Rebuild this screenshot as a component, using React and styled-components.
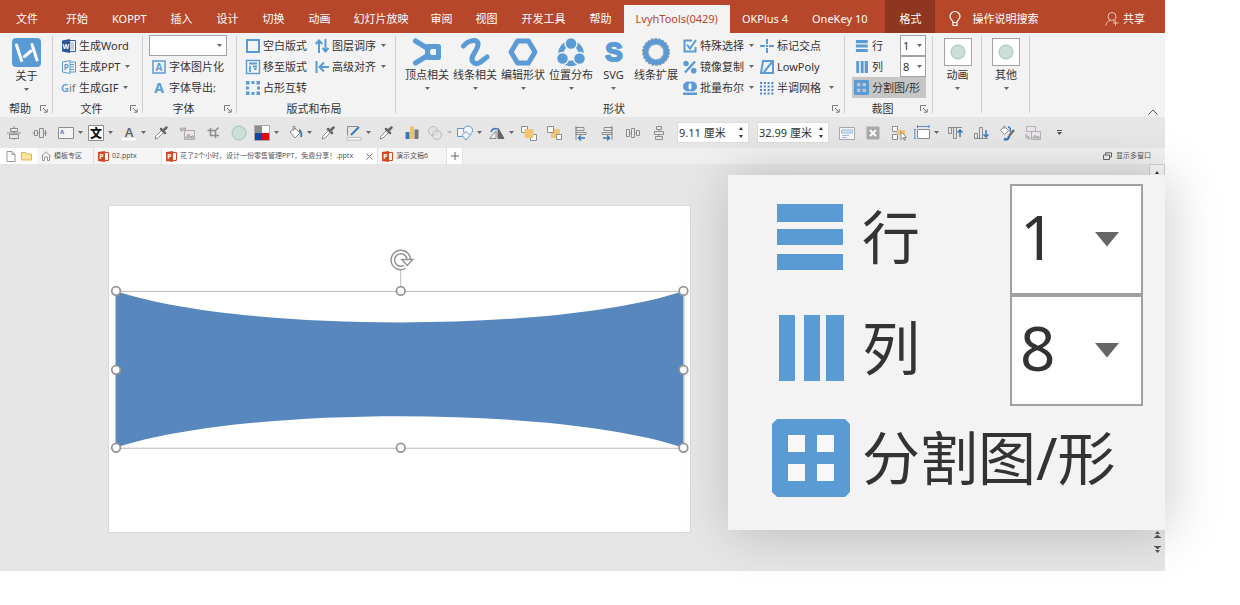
import React, { useState } from 'react';
import styled, { createGlobalStyle } from 'styled-components';

const BLUE = '#5b9bd5';
const GREY = '#8c8c8c';

const GlobalStyle = createGlobalStyle`
    * {
        box-sizing: border-box;
    }
    body {
        margin: 0;
        background: #fff;
        color: #333;
        font-family: 'Noto Sans', 'Noto Sans CJK SC', sans-serif;
        font-size: 11px;
        line-height: 16px;
    }
    button, input, select {
        margin: 0;
        padding: 0;
        border: 0;
        border-radius: 0;
        background: none;
        color: inherit;
        font: inherit;
        white-space: nowrap;
    }
    svg {
        display: block;
        flex: none;
        overflow: visible;
    }
`;

const Page = styled.div`
    display: flex;
    flex-direction: column;
    min-height: 100vh;
    padding: 0 75px 34px 0;
    overflow: hidden;
`;

/* ---------- menu tabs ---------- */

const MenuBar = styled.nav`
    display: flex;
    align-items: flex-end;
    height: 33px;
    padding-left: 4px;
    background: #b7472a;
    color: #fff;
`;

const MenuTab = styled.button`
    flex: none;
    height: ${p => (p.$shade ? 33 : 28)}px;
    padding: ${p => (p.$shade ? '5px 14px 0' : p.$tight ? '0 11px' : '0 12px')};
    margin-right: ${p => p.$gap || 0}px;
    background: ${p => (p.$active ? '#f3f3f3' : p.$shade ? '#8f3620' : 'transparent')};
    color: ${p => (p.$active ? '#b7472a' : '#fff')};
`;

const MenuAction = styled.button`
    display: flex;
    align-items: center;
    gap: ${p => p.$gap}px;
    height: 28px;
    margin-left: ${p => (p.$end ? 'auto' : '14px')};
    margin-right: ${p => (p.$end ? '20px' : '0')};
`;

/* ---------- ribbon ---------- */

const Ribbon = styled.div`
    display: flex;
    height: 84px;
    background: #f3f3f3;
`;

const GroupBox = styled.section`
    position: relative;
    flex: none;
    display: flex;
    flex-direction: column;
    width: ${p => p.$w}px;
    padding-top: 2px;
    &::after {
        content: '';
        position: absolute;
        top: 3px;
        right: 0;
        bottom: 4px;
        width: 1px;
        background: #cfcfcf;
    }
`;

const GroupBody = styled.div`
    display: flex;
    height: 63px;
    padding-left: ${p => p.$pad || 0}px;
`;

const GroupFooter = styled.div`
    display: flex;
    align-items: center;
    height: 19px;
    padding: 3px 5px 0 0;
    > span {
        flex: 1;
        text-align: center;
    }
`;

const Column = styled.div`
    display: flex;
    flex-direction: column;
    width: ${p => (p.$w ? p.$w + 'px' : 'auto')};
`;

const SmallButton = styled.button`
    display: flex;
    align-items: center;
    gap: 3px;
    height: 21px;
    width: ${p => (p.$pressed ? '74px' : 'auto')};
    padding-left: ${p => p.$pad || 0}px;
    background: ${p => (p.$pressed ? '#c6c6c6' : 'transparent')};
    > svg:nth-of-type(2) {
        margin-left: ${p => p.$arrowGap || 2}px;
    }
`;

const BigButton = styled.button`
    display: flex;
    flex-direction: column;
    align-items: center;
    width: ${p => p.$w}px;
    padding-top: 3px;
    > span {
        margin: 1px 0 4px;
    }
`;

const Swatch = styled.i`
    display: grid;
    place-items: center;
    width: 28px;
    height: 28px;
    border: 1px solid #a3a3a3;
    background: #fff;
`;

const SelectBox = styled.div`
    display: grid;
    align-items: center;
    width: ${p => p.$w}px;
    height: ${p => p.$h}px;
    border: ${p => p.$line}px solid #a0a0a0;
    background: #fff;
    > * {
        grid-area: 1 / 1;
    }
    > svg {
        justify-self: end;
        margin-right: ${p => p.$arrowPad}px;
        pointer-events: none;
    }
    > select {
        appearance: none;
        width: 100%;
        height: 100%;
        padding-left: ${p => p.$textPad}px;
        outline: none;
    }
`;

const CutField = styled.div`
    display: flex;
    align-items: center;
    height: 21px;
    width: 74px;
    padding-left: 3px;
    gap: 3px;
    > label {
        flex: 1;
    }
`;

const CollapseButton = styled.button`
    align-self: flex-end;
    margin: 0 7px 2px auto;
`;

/* ---------- quick access bar ---------- */

const QuickBar = styled.div`
    display: flex;
    align-items: center;
    height: 31px;
    padding-left: 6px;
    background: #e6e6e6;
`;

const Tool = styled.button`
    display: flex;
    align-items: center;
    flex: none;
    gap: 4px;
    width: ${p => p.$w}px;
    height: 22px;
`;

const SpinBox = styled.div`
    display: flex;
    flex: none;
    align-items: center;
    width: 72px;
    height: 21px;
    margin-right: ${p => p.$gap}px;
    background: #fff;
    border: 1px solid #dcdcdc;
    > input {
        flex: 1;
        min-width: 0;
        padding-left: 1px;
        outline: none;
    }
    > div {
        display: flex;
        flex-direction: column;
        gap: 5px;
        margin-right: 4px;
    }
`;

const StepButton = styled.button`
    display: block;
    line-height: 0;
`;

/* ---------- document tabs ---------- */

const DocBar = styled.div`
    display: flex;
    align-items: stretch;
    height: 16px;
    background: #f0f0f0;
    color: #555;
    font-size: 7px;
    line-height: 10px;
`;

const DocTab = styled.button`
    display: flex;
    align-items: center;
    flex: none;
    gap: 3px;
    width: ${p => p.$w}px;
    padding: 0 4px;
    border-right: 1px solid #e0e0e0;
    background: ${p => (p.$active ? '#fff' : '#f5f5f5')};
    > svg:nth-of-type(2) {
        margin-left: auto;
    }
`;

const DocTools = styled.div`
    display: flex;
    align-items: center;
    gap: 5px;
    width: 37px;
    padding-left: 6px;
    background: #fff;
`;

const WindowsButton = styled.button`
    display: flex;
    align-items: center;
    gap: 4px;
    margin: 0 14px 0 auto;
`;

/* ---------- canvas ---------- */

const Canvas = styled.main`
    position: relative;
    display: flex;
    flex: 1;
    justify-content: space-between;
    background: #e6e6e6;
`;

const Slide = styled.div`
    width: 50%;
    margin: 41px 0 38px 108px;
    aspect-ratio: 16 / 9;
    align-self: flex-start;
    background: #fff;
    border: 1px solid #d9d9d9;
    > svg {
        width: 100%;
        height: 100%;
    }
`;

const ScrollRail = styled.div`
    display: flex;
    flex-direction: column;
    justify-content: space-between;
    align-items: center;
    width: 16px;
    padding-bottom: 18px;
`;

const ScrollUp = styled.button`
    display: grid;
    place-items: center;
    width: 16px;
    height: 16px;
    border: 1px solid #d0d0d0;
    background: #f5f5f5;
`;

const PageSteps = styled.div`
    display: flex;
    flex-direction: column;
    gap: 8px;
`;

const Magnifier = styled.aside`
    position: absolute;
    top: 11px;
    right: 0;
    width: 437px;
    padding: 9px 22px 19px 44px;
    background: #f3f3f3;
    box-shadow: 4px 2px 50px rgba(0, 0, 0, 0.2);
    font-size: 58px;
    line-height: 84px;
`;

const MagnifierRow = styled.div`
    display: flex;
    align-items: center;
    height: ${p => p.$h}px;
    gap: 12px;
    > svg, > label {
        margin-bottom: 6px;
    }
    > label {
        flex: 1;
    }
    select {
        padding-bottom: 7px;
        font-size: 62px;
    }
`;

const MagnifierButton = styled.button`
    display: flex;
    align-items: center;
    gap: 12px;
    margin-bottom: 2px;
`;

/* ---------- small drawings ---------- */

const Arrow = ({ size = 5, color = '#666' }) => (
    <svg width={size} height={size * 0.6} viewBox="0 0 10 6"><path d="M0 0h10L5 6z" fill={color} /></svg>
);

const Step = ({ up }) => (
    <svg width="6" height="4" viewBox="0 0 6 4"><path d={up ? 'M1 4h4L3 1z' : 'M1 0h4L3 3z'} fill="#333" /></svg>
);

const Launcher = () => (
    <svg width="8" height="8" viewBox="0 0 8 8" fill="none" stroke="#777">
        <path d="M.5 6V.5H6M3 3l4 4M7.2 4v3.2H4" />
    </svg>
);

const Icon14 = ({ children, ...rest }) => (
    <svg width="14" height="14" viewBox="0 0 14 14" fill="none" stroke={BLUE} strokeWidth="2" {...rest}>{children}</svg>
);

const Icon28 = ({ children }) => (
    <svg width="28" height="28" viewBox="0 0 28 28" fill="none" stroke={BLUE} strokeWidth="5" strokeLinecap="round" strokeLinejoin="round">{children}</svg>
);

const Icon16 = ({ children }) => (
    <svg width="16" height="16" viewBox="0 0 16 16" fill="none" stroke={GREY}>{children}</svg>
);

const RowsIcon = ({ size = 14 }) => (
    <svg width={size} height={size} viewBox="0 0 78 78" fill={BLUE}>
        <path d="M5 6h66v18H5zM5 31h66v16H5zM5 56h66v16H5z" />
    </svg>
);

const ColsIcon = ({ size = 14 }) => (
    <svg width={size} height={size} viewBox="0 0 78 78" fill={BLUE}>
        <path d="M7 6h16v66H7zM32 6h16v66H32zM54 6h18v66H54z" />
    </svg>
);

const SplitIcon = ({ size = 14, hole = '#f8f8f8' }) => (
    <svg width={size} height={size} viewBox="0 0 78 78">
        <path d="M5 0h68l5 5v68l-5 5H5l-5-5V5z" fill={BLUE} />
        <path d="M16 16h17v17H16zM45 16h17v17H45zM16 45h17v17H16zM45 45h17v17H45z" fill={hole} />
    </svg>
);

const WordIcon = () => (
    <Icon14 stroke="none">
        <path d="M7 1.5h6.5v11H7z" fill="#fff" stroke="#2b579a" strokeWidth="1" />
        <path d="M8 4h4M8 6h4M8 8h4M8 10h4" stroke="#7d9cc9" strokeWidth="1" />
        <path d="M0 1.5L8 0v14l-8-1.5z" fill="#2b579a" />
        <text x="4" y="9.6" fontSize="7" fontWeight="700" textAnchor="middle" fill="#fff">W</text>
    </Icon14>
);

const PptOutlineIcon = () => (
    <Icon14 strokeWidth="1">
        <path d="M8 2h5.5v10H8M8 4.5h4M8 7h4M8 9.500h4M.5 2L8 .5v13L.5 12z" />
        <text x="4.300" y="10" fontSize="8" fontWeight="700" textAnchor="middle" fill={BLUE} stroke="none">P</text>
    </Icon14>
);

const GifIcon = () => (
    <Icon14 stroke="none">
        <text x="-1" y="11" fontSize="11" fontWeight="600" fill={BLUE}>G</text>
        <text x="7" y="11" fontSize="11" fill="#777">if</text>
    </Icon14>
);

const BoxedAIcon = () => (
    <Icon14>
        <rect x="1" y="1" width="12" height="12" strokeWidth="1.500" />
        <text x="7" y="10.500" fontSize="10" fontWeight="700" textAnchor="middle" fill={BLUE} stroke="none">A</text>
    </Icon14>
);

const PlainAIcon = () => (
    <Icon14 stroke="none">
        <text x="7" y="12" fontSize="14" fontWeight="700" textAnchor="middle" fill={BLUE}>A</text>
    </Icon14>
);

const BlankLayoutIcon = () => <Icon14><rect x="1" y="1" width="12" height="12" /></Icon14>;

const MoveLayoutIcon = () => (
    <Icon14 strokeWidth="1">
        <rect x=".5" y=".5" width="13" height="13" strokeWidth="1.400" />
        <path d="M3 3.500h8M4 6v6M7 6.500h4M8 9h2.500" strokeWidth="1.800" />
    </Icon14>
);

const DotsSquareIcon = () => (
    <Icon14 stroke="none" fill={BLUE}>
        <path d="M0 0h3.500v3.500H0zM5.500 0h3v3h-3zM10.500 0H14v3.500h-3.500zM0 5.500h3v3H0zM11 5.500h3v3h-3zM0 10.500h3.500V14H0zM5.500 11h3v3h-3zM10.500 10.500H14V14h-3.500z" />
    </Icon14>
);

const OrderIcon = () => <Icon14><path d="M4 14V2M.7 5L4 1.500 7.300 5M10.500 0v12M7.500 9l3 3.500 3-3.500" /></Icon14>;
const AlignIcon = () => <Icon14><path d="M1.500 1v12M14 7H5M9 2.500L4.500 7 9 11.500" /></Icon14>;
const PickIcon = () => <Icon14><path d="M9 1.500H1.500v11h11V8M4 5.500l3 4 6-8.500" /></Icon14>;

const MirrorIcon = () => (
    <Icon14 stroke="none" fill={BLUE}>
        <circle cx="3" cy="3.500" r="2.700" />
        <path d="M2 12.500L12 1.500" stroke={BLUE} strokeWidth="2.500" />
        <rect x="8" y="8" width="5.500" height="5.500" rx="2" />
    </Icon14>
);

const BooleanIcon = () => (
    <Icon14 stroke="none" fill={BLUE}>
        <circle cx="5" cy="5.500" r="5" /><circle cx="9" cy="5.500" r="5" />
        <ellipse cx="7" cy="5.500" rx="1.600" ry="3.300" fill="#f3f3f3" />
        <path d="M0 11.500h14V14H0z" />
    </Icon14>
);

const CrossIcon = () => <Icon14><path d="M7 0v5M7 9v5M0 7h5M9 7h5M6 7h2" /></Icon14>;
const LowPolyIcon = () => <Icon14><path d="M3 1h10v12H1L3 1zM12.500 1.500L4 12" /></Icon14>;

const HalftoneIcon = () => (
    <Icon14 strokeWidth="2" strokeDasharray="2 1.800" stroke="#4a85c5">
        <path d="M0 2h14M0 5.500h14M0 9h14M0 12.500h14" />
    </Icon14>
);

const AboutLogo = () => (
    <svg width="29" height="29" viewBox="0 0 29 29">
        <rect width="29" height="29" rx="4" fill={BLUE} />
        <path d="M4.500 7l5 15.500M20 6.500l5 15.500M12.500 18.500l6.500-5.500" stroke="#fff" strokeWidth="3" strokeLinecap="round" />
    </svg>
);

const ShapeIcons = {
    vertex: <Icon28><path d="M2.500 3l13 8M2.500 25l13-8" strokeWidth="5" /><rect x="14.500" y="8.500" width="11" height="11" /></Icon28>,
    line: <Icon28><path d="M2.500 8C7 2 18 0 17 7S8 19 12 24s11-3 14-5" /></Icon28>,
    edit: <Icon28><path d="M8.500 3h11L26 14l-6.500 11h-11L2 14z" /></Icon28>,
    place: (
        <Icon28>
            <circle cx="14" cy="15.500" r="10" strokeWidth="5.500" />
            <g stroke="#f3f3f3" strokeWidth="1.500" fill={BLUE}>
                <circle cx="14" cy="5.500" r="6" /><circle cx="5.500" cy="20.500" r="6" /><circle cx="22.500" cy="20.500" r="6" />
            </g>
        </Icon28>
    ),
    svg: <Icon28><text x="14" y="23" fontSize="26" fontWeight="700" fontFamily="Liberation Sans" textAnchor="middle" fill={BLUE} strokeWidth="2">S</text></Icon28>,
    expand: (
        <Icon28>
            <circle cx="14" cy="14" r="10.500" stroke="#999" strokeWidth="7" strokeLinecap="butt" strokeDasharray="2 1" />
            <circle cx="14" cy="14" r="10.500" />
        </Icon28>
    ),
};

const Dropper = () => (
    <Icon16>
        <path d="M2 14l1-3 6-6 2 2-6 6z" fill="#fff" />
        <path d="M8 4l4 4M10.500 5.500l3-3" stroke="#666" strokeWidth="2.500" strokeLinecap="round" />
    </Icon16>
);

const quickIcons = {
    alignMiddle: <Icon16><path d="M4.500 3.500h7v3h-7zM3.500 9.500h9v4h-9zM8 1v2.500M8 6.500v3M8 13.500V15M1 8h14" /></Icon16>,
    alignCenter: <Icon16><path d="M2.500 5.500h3v5h-3zM7.500 3.500h4v9h-4zM.5 8h2M5.500 8h2M11.500 8H15M13.500 5v6" /></Icon16>,
    textBox: (
        <Icon16>
            <path d="M.5 2.500h15v11H.5z" fill="#f4f4f4" />
            <text x="2" y="8.500" fontSize="6" fontWeight="700" fill="#3b78b8" stroke="none">A</text>
        </Icon16>
    ),
    wen: (
        <Icon16>
            <path d="M.5.5h15v15H.5z" fill="#fff" />
            <text x="8" y="12.500" fontSize="12" fontWeight="900" fontFamily="Noto Sans CJK SC" textAnchor="middle" fill="#111" stroke="none">文</text>
        </Icon16>
    ),
    fontColor: (
        <Icon16>
            <path d="M1 13h14v2.500H1z" fill="#fff" stroke="none" />
            <text x="8" y="12" fontSize="13" fontWeight="600" textAnchor="middle" fill="#666" stroke="none">A</text>
        </Icon16>
    ),
    dropper: <Dropper />,
    resetPicture: (
        <Icon16>
            <path d="M5.500 5.500h10v9h-10z" fill="#eee3ee" stroke="#aaa" />
            <path d="M6.500 13l3-4 2.500 3 1.500-1.500 2 2.500zM1 5h5.500V3H4M3 2L1 4l2 3" fill="#bbb" stroke="#aaa" />
        </Icon16>
    ),
    crop: <Icon16><path d="M5.500 3v7.500H14M2.500 5.500h8V13M11 5l2.500-2.500" strokeWidth="1.500" /></Icon16>,
    circle: <Icon16><circle cx="8" cy="8" r="7" fill="#cbdfd7" stroke="#a3c4b6" /></Icon16>,
    palette: (
        <Icon16>
            <g stroke="none">
                <path d="M1 1h7v7H1z" fill="#8d8d8d" /><path d="M8 1h7v7H8z" fill="#fff" />
                <path d="M1 8h7v7H1z" fill="#0d47a1" /><path d="M8 8h7v7H8z" fill="#e30613" />
            </g>
            <path d="M.5.5h15v15H.5z" stroke="#aaa" />
        </Icon16>
    ),
    fill: (
        <Icon16>
            <path d="M3 7l5-4 5 5-5 5zM6 6V1.500h2V5" fill="#fff" />
            <path d="M12 5c2 1 3 4 2 7" stroke="#3b78b8" strokeWidth="2" />
        </Icon16>
    ),
    outline: (
        <Icon16>
            <path d="M12 1.500H1.500v9" /><path d="M1 12.500h14v2.500H1z" fill="#fff" stroke="#bbb" />
            <path d="M5 10l8-8" stroke="#3b78b8" strokeWidth="2" />
        </Icon16>
    ),
    chart: (
        <Icon16>
            <g stroke="none"><path d="M1.500 7h4v7h-4z" fill="#3b78b8" /><path d="M6 1.500h4V14H6z" fill="#edc26e" /><path d="M10.500 4.500h4V14h-4z" fill="#777" /></g>
        </Icon16>
    ),
    merge: <Icon16><g fill="#e5dde5" fillOpacity=".6" stroke="#bbb"><circle cx="6" cy="6" r="4.500" /><circle cx="10" cy="10" r="4.500" /></g></Icon16>,
    shapes: (
        <Icon16>
            <g fill="#f2f6fb" stroke="#6b96c4"><path d="M.5 3.500h8v8h-8z" /><circle cx="11" cy="5.500" r="4.500" /><path d="M9 6.500l4 4-4 4.500-4-4.500z" /></g>
        </Icon16>
    ),
    flip: (
        <Icon16>
            <path d="M7 13.500H.5L7 6z" fill="#eee" /><path d="M9 13.500h6L9 3z" fill="#666" stroke="#666" />
            <path d="M2 7c1-3 3-4 6-3" stroke="#3b78b8" strokeWidth="1.500" />
        </Icon16>
    ),
    front: (
        <Icon16>
            <path d="M.5 1.500h6v6h-6zM9.500 9.500h6v6h-6z" fill="#fff" /><path d="M3.500 4h9v9h-9z" fill="#f0c674" stroke="none" />
        </Icon16>
    ),
    back: (
        <Icon16>
            <path d="M4 4h9v9H4z" fill="#f0c674" stroke="none" /><path d="M.5 1.500h6v6h-6zM9.500 9.500h5v5h-5z" fill="#fff" />
        </Icon16>
    ),
    left: (
        <Icon16>
            <path d="M3 1v14M3 2.500h8v3H3zM3 7.500h10v2H3z" /><path d="M12 13H6M8 10.500L5.500 13 8 15.500" stroke="#3b78b8" strokeWidth="1.500" />
        </Icon16>
    ),
    right: (
        <Icon16>
            <path d="M13 1v14M5 2.500h8v3H5zM3 7.500h10v2H3z" /><path d="M4 13h6M8 10.500l2.500 2.500L8 15.500" stroke="#3b78b8" strokeWidth="1.500" />
        </Icon16>
    ),
    spreadX: <Icon16><path d="M1.500 4.500h3v7h-3zM6.500 3.500h3v9h-3zM11.500 5.500h3v5h-3zM4.500 8h2M9.500 8h2" /></Icon16>,
    spreadY: <Icon16><path d="M5.500 1.500h5v3h-5zM3.500 6.500h9v3h-9zM4.500 11.500h7v3h-7zM8 4.500v2M8 9.500v2" /></Icon16>,
    note: (
        <Icon16>
            <path d="M.5 2.500h15v12H.5z" fill="#fafafa" stroke="#aaa" /><path d="M2.500 5h11v3h-11z" fill="#d5e3f2" stroke="#9fbcdc" /><path d="M3 10.500h7M3 12.500h5" stroke="#9fbcdc" />
        </Icon16>
    ),
    close: <Icon16><path d="M2 2h12v12H2z" fill="#aaa" stroke="#aaa" /><path d="M5 5l6 6M11 5l-6 6" stroke="#fff" strokeWidth="2" /></Icon16>,
    select: (
        <Icon16>
            <path d="M1.500 1.500h5v5h-5zM1.500 9.500h5v5h-5z" fill="#fff" /><path d="M6 5h8v5H6z" fill="#f0c674" stroke="none" />
            <path d="M10 6.500v8l2-2 1.500 3 1-.500-1.500-2.500h2.500z" fill="#fff" />
        </Icon16>
    ),
    size: <Icon16><path d="M3.500 4.500h12v9h-12z" fill="#fff" /><path d="M.8 4v10M3 1.500h12.500M0 4.500h2M0 13.500h2M3.500 0v3M15 0v3" stroke="#5b8fc4" /></Icon16>,
    top: (
        <Icon16>
            <path d="M1 2.500h14M1.500 2.500h3v6h-3zM6.500 2.500h3v11h-3z" /><path d="M13 12V5M10.500 7.500L13 5l2.500 2.500" stroke="#3b78b8" strokeWidth="1.500" />
        </Icon16>
    ),
    bottom: (
        <Icon16>
            <path d="M1 13.500h14M1.500 8.500h3v5h-3zM6.500 2.500h3v11h-3z" /><path d="M13 5v7M10.500 9.500L13 12l2.500-2.500" stroke="#3b78b8" strokeWidth="1.500" />
        </Icon16>
    ),
    brush: (
        <Icon16>
            <path d="M1.500 5l4-3.500 4 4-4 4zM5 4V.5" fill="#fff" /><path d="M15 5l-5 6" stroke="#666" strokeWidth="2" />
            <path d="M5 14c3 1 5 0 5-3" stroke="#3b78b8" strokeWidth="2.500" /><path d="M9 2c2 0 3 2 2 5" stroke="#3b78b8" strokeWidth="1.500" />
        </Icon16>
    ),
    changePicture: (
        <Icon16>
            <path d="M1.500 1.500h9v5h-9zM6.500 6.500h9v8h-9z" fill="#ece4ec" stroke="#b5b0b5" />
            <path d="M7.500 13l2.500-3 2 2 1-1 2 2zM1 9v4h4M3 11l2 2-2 2" fill="#bbb" stroke="#b5b0b5" />
        </Icon16>
    ),
};

const DocIcon = () => <svg width="10" height="11" viewBox="0 0 10 11" fill="#fff" stroke="#999"><path d="M1 .5h5l3 3v7H1zM6 .5v3h3" /></svg>;
const FolderIcon = () => <svg width="11" height="10" viewBox="0 0 11 10" fill="#fce39a" stroke="#d9b44f"><path d="M.5 1.500h4l1 1.500h5v6H.5z" /></svg>;
const HomeIcon = () => <svg width="10" height="10" viewBox="0 0 10 10" fill="none" stroke="#999"><path d="M.5 5L5 .8 9.500 5M1.500 4v5.500h2V6h3v3.500h2V4" /></svg>;
const TabCloseIcon = () => <svg width="7" height="7" viewBox="0 0 7 7" stroke="#777"><path d="M.5.5l6 6M6.500.5l-6 6" /></svg>;
const WindowsIcon = () => <svg width="9" height="8" viewBox="0 0 9 8" fill="none" stroke="#666"><path d="M.5 3h6v4.500h-6zM2.500 3V.8h6V5h-2" /></svg>;

const PptIcon = () => (
    <svg width="11" height="11" viewBox="0 0 11 11">
        <path d="M6 1.500h4.500v8H6z" fill="#fff" stroke="#d24726" />
        <path d="M0 1l7-1v11l-7-1z" fill="#d24726" />
        <text x="3.500" y="8" fontSize="7" fontWeight="700" textAnchor="middle" fill="#fff">P</text>
    </svg>
);

const BulbIcon = () => (
    <svg width="12" height="16" viewBox="0 0 12 16" fill="none" stroke="#fff" strokeWidth="1.200">
        <path d="M4 11.500C4 9 1 8.500 1 5.500a5 5 0 0110 0C11 8.500 8 9 8 11.500zM4 11.500v3h4v-3" />
    </svg>
);

const PersonIcon = () => (
    <svg width="14" height="14" viewBox="0 0 14 14" fill="none" stroke="#e9c4ba">
        <circle cx="7" cy="4.500" r="4" /><path d="M.8 13.500c.5-3 2-4.500 4.500-5M8 8.500l1.500 1M10.500 8.500v5M8 11h5.500" />
    </svg>
);

const PageStep = ({ down }) => (
    <svg width="7" height="7" viewBox="0 0 7 7" fill="#555">
        <path d={down ? 'M0 0h7v1H0zM1 1h5L3.500 3.500zM1 4h5L3.500 7z' : 'M0 6h7v1H0zM1 6h5L3.500 3.500zM1 3h5L3.500 0z'} />
    </svg>
);

const menuTabs = [
    { name: '文件', gap: 4 }, { name: '开始' }, { name: 'KOPPT' }, { name: '插入' }, { name: '设计' },
    { name: '切换' }, { name: '动画' }, { name: '幻灯片放映', tight: true }, { name: '审阅', tight: true }, { name: '视图' },
    { name: '开发工具' }, { name: '帮助' }, { name: 'LvyhTools(0429)', active: true },
    { name: 'OKPlus 4' }, { name: 'OneKey 10', gap: 6 }, { name: '格式', shade: true },
];

const bigShapes = [
    { name: '顶点相关', icon: 'vertex', w: 48, arrow: true },
    { name: '线条相关', icon: 'line', w: 48, arrow: true },
    { name: '编辑形状', icon: 'edit', w: 48, arrow: true },
    { name: '位置分布', icon: 'place', w: 48, arrow: true },
    { name: 'SVG', icon: 'svg', w: 37, arrow: true },
    { name: '线条扩展', icon: 'expand', w: 48 },
];

// [icon, slot width, has arrow, arrow colour]
const toolsBefore = [
    ['alignMiddle', 26], ['alignCenter', 26], ['textBox', 30, true], ['wen', 33, true],
    ['fontColor', 32, true], ['dropper', 26], ['resetPicture', 26], ['crop', 26],
    ['circle', 23], ['palette', 33, true], ['fill', 33, true], ['dropper', 26],
    ['outline', 32, true], ['dropper', 26], ['chart', 23], ['merge', 30, true, '#bbb'],
    ['shapes', 32, true], ['flip', 32, true], ['front', 26], ['back', 26],
    ['left', 26], ['right', 26], ['spreadX', 26], ['spreadY', 26],
];

const toolsAfter = [
    ['note', 26], ['close', 26], ['select', 23], ['size', 33, true], ['top', 26],
    ['bottom', 26], ['brush', 26], ['changePicture', 32],
];

const handles = [[7, 85], [292, 85], [575, 85], [7, 164], [575, 164], [7, 242], [292, 242], [575, 242]];

function Group({ name, width, pad, launcher, children }) {
    return (
        <GroupBox $w={width}>
            <GroupBody $pad={pad}>{children}</GroupBody>
            <GroupFooter>
                <span>{name}</span>
                {launcher && <Launcher />}
            </GroupFooter>
        </GroupBox>
    );
}

function Small({ icon, text, arrow, arrowGap }) {
    return (
        <SmallButton $arrowGap={arrowGap}>
            {icon}
            <span>{text}</span>
            {arrow && <Arrow />}
        </SmallButton>
    );
}

function Picker({ id, value, onChange, label, big }) {
    const sizes = big
        ? { $w: 133, $h: 111, $line: 2, $arrowPad: 22, $textPad: 8 }
        : { $w: 26, $h: 21, $line: 1, $arrowPad: 3, $textPad: 2 };
    return (
        <SelectBox {...sizes}>
            <select id={id} aria-label={label} value={value} onChange={e => onChange(Number(e.target.value))}>
                {[1, 2, 3, 4, 5, 6, 7, 8, 9, 10].map(n => <option key={n} value={n}>{n}</option>)}
            </select>
            <Arrow size={big ? 24 : 5} />
        </SelectBox>
    );
}

function Spin({ label, initial, gap }) {
    const [value, setValue] = useState(initial);
    const step = by => setValue(v => (parseFloat(v) + by).toFixed(2) + ' 厘米');
    return (
        <SpinBox $gap={gap}>
            <input type="text" aria-label={label} value={value} onChange={e => setValue(e.target.value)} />
            <div>
                <StepButton aria-label={label + '+'} onClick={() => step(0.1)}><Step up /></StepButton>
                <StepButton aria-label={label + '-'} onClick={() => step(-0.1)}><Step /></StepButton>
            </div>
        </SpinBox>
    );
}

const renderTools = tools => tools.map(([name, width, arrow, color], index) => (
    <Tool key={index} $w={width} aria-label={name}>
        {quickIcons[name]}
        {arrow && <Arrow color={color} />}
    </Tool>
));

function App() {
    const [rows, setRows] = useState(1);
    const [cols, setCols] = useState(8);

    return (
        <Page>
            <GlobalStyle />
            <MenuBar>
                {menuTabs.map(tab => (
                    <MenuTab key={tab.name} $gap={tab.gap} $tight={tab.tight} $active={tab.active} $shade={tab.shade}>{tab.name}</MenuTab>
                ))}
                <MenuAction $gap={11}><BulbIcon />操作说明搜索</MenuAction>
                <MenuAction $gap={4} $end><PersonIcon />共享</MenuAction>
            </MenuBar>

            <Ribbon>
                <Group name="帮助" width={53} launcher>
                    <BigButton $w={53}><AboutLogo /><span>关于</span><Arrow /></BigButton>
                </Group>
                <Group name="文件" width={90} pad={9} launcher>
                    <Column>
                        <Small icon={<WordIcon />} text="生成Word" />
                        <Small icon={<PptOutlineIcon />} text="生成PPT" arrow />
                        <Small icon={<GifIcon />} text="生成GIF" arrow />
                    </Column>
                </Group>
                <Group name="字体" width={94} pad={6} launcher>
                    <Column>
                        <SelectBox $w={78} $h={21} $line={1} $arrowPad={4} $textPad={4}>
                            <select aria-label="字体"><option /></select>
                            <Arrow />
                        </SelectBox>
                        <SmallButton $pad={3}><BoxedAIcon /><span>字体图片化</span></SmallButton>
                        <SmallButton $pad={3}><PlainAIcon /><span>字体导出:</span></SmallButton>
                    </Column>
                </Group>
                <Group name="版式和布局" width={159} pad={9}>
                    <Column $w={69}>
                        <Small icon={<BlankLayoutIcon />} text="空白版式" />
                        <Small icon={<MoveLayoutIcon />} text="移至版式" />
                        <Small icon={<DotsSquareIcon />} text="占形互转" />
                    </Column>
                    <Column>
                        <Small icon={<OrderIcon />} text="图层调序" arrow />
                        <Small icon={<AlignIcon />} text="高级对齐" arrow />
                    </Column>
                </Group>
                <Group name="形状" width={449} pad={7} launcher>
                    {bigShapes.map(shape => (
                        <BigButton key={shape.name} $w={shape.w}>
                            {ShapeIcons[shape.icon]}
                            <span>{shape.name}</span>
                            {shape.arrow && <Arrow />}
                        </BigButton>
                    ))}
                    <Column $w={80}>
                        <SmallButton $pad={3}><PickIcon /><span>特殊选择</span><Arrow /></SmallButton>
                        <SmallButton $pad={3}><MirrorIcon /><span>镜像复制</span><Arrow /></SmallButton>
                        <SmallButton $pad={3}><BooleanIcon /><span>批量布尔</span><Arrow /></SmallButton>
                    </Column>
                    <Column>
                        <Small icon={<CrossIcon />} text="标记交点" />
                        <Small icon={<LowPolyIcon />} text="LowPoly" />
                        <Small icon={<HalftoneIcon />} text="半调网格" arrow arrowGap={5} />
                    </Column>
                </Group>
                <Group name="裁图" width={88} pad={7} launcher>
                    <Column>
                        <CutField>
                            <RowsIcon /><label htmlFor="rows">行</label>
                            <Picker id="rows" value={rows} onChange={setRows} />
                        </CutField>
                        <CutField>
                            <ColsIcon /><label htmlFor="cols">列</label>
                            <Picker id="cols" value={cols} onChange={setCols} />
                        </CutField>
                        <SmallButton $pressed $pad={2}><SplitIcon size={15} hole="#c6c6c6" /><span>分割图/形</span></SmallButton>
                    </Column>
                </Group>
                <Group width={49}>
                    <BigButton $w={49}>
                        <Swatch>{quickIcons.circle}</Swatch><span>动画</span><Arrow />
                    </BigButton>
                </Group>
                <Group width={48}>
                    <BigButton $w={48}>
                        <Swatch>{quickIcons.circle}</Swatch><span>其他</span><Arrow />
                    </BigButton>
                </Group>
                <CollapseButton aria-label="collapse">
                    <svg width="10" height="6" viewBox="0 0 10 6" fill="none" stroke="#555"><path d="M.5 5.500L5 1l4.500 4.500" /></svg>
                </CollapseButton>
            </Ribbon>

            <QuickBar>
                {renderTools(toolsBefore)}
                <Spin label="高度" initial="9.11 厘米" gap={8} />
                <Spin label="宽度" initial="32.99 厘米" gap={10} />
                {renderTools(toolsAfter)}
                <Tool $w={10} aria-label="more">
                    <svg width="5" height="6" viewBox="0 0 5 6" fill="#555"><path d="M0 0h5v1H0zM0 2h5L2.500 5z" /></svg>
                </Tool>
            </QuickBar>

            <DocBar>
                <DocTools><DocIcon /><FolderIcon /></DocTools>
                <DocTab $w={57}><HomeIcon />模板专区</DocTab>
                <DocTab $w={68}><PptIcon />02.pptx</DocTab>
                <DocTab $w={216} $active><PptIcon />花了2个小时，设计一份零售管理PPT，免费分享！.pptx<TabCloseIcon /></DocTab>
                <DocTab $w={69}><PptIcon />演示文稿6</DocTab>
                <DocTab $w={16} $active aria-label="new">
                    <svg width="8" height="8" viewBox="0 0 8 8" stroke="#666"><path d="M4 0v8M0 4h8" /></svg>
                </DocTab>
                <WindowsButton><WindowsIcon />显示多窗口</WindowsButton>
            </DocBar>

            <Canvas>
                <Slide>
                    <svg viewBox="0 0 581 326">
                        <path d="M7 85C132 127 450 127 575 85V242C450 200 132 200 7 242Z" fill="#5887be" />
                        <path d="M7 85.500H575M7 242.500H575M6.500 85V242M575.500 85V242M292 85V64" fill="none" stroke="#bbb" />
                        {handles.map(([x, y]) => (
                            <circle key={x + '-' + y} cx={x} cy={y} r="4.300" fill="#fff" stroke="#949494" strokeWidth="1.700" />
                        ))}
                        <g fill="none" stroke="#949494">
                            <path d="M300 55a8 8 0 10-4 6" strokeWidth="5" />
                            <path d="M300 55a8 8 0 10-4 6" strokeWidth="2" stroke="#fff" />
                            <path d="M293 53.500h11l-5.500 6z" fill="#fff" strokeWidth="1.500" />
                        </g>
                    </svg>
                </Slide>
                <ScrollRail>
                    <ScrollUp aria-label="up"><Step up /></ScrollUp>
                    <PageSteps><PageStep /><PageStep down /></PageSteps>
                </ScrollRail>
                <Magnifier>
                    <MagnifierRow $h={111}>
                        <RowsIcon size={78} /><label htmlFor="rows-large">行</label>
                        <Picker id="rows-large" value={rows} onChange={setRows} big />
                    </MagnifierRow>
                    <MagnifierRow $h={111}>
                        <ColsIcon size={78} /><label htmlFor="cols-large">列</label>
                        <Picker id="cols-large" value={cols} onChange={setCols} big />
                    </MagnifierRow>
                    <MagnifierRow $h={105}>
                        <MagnifierButton><SplitIcon size={78} /><span>分割图/形</span></MagnifierButton>
                    </MagnifierRow>
                </Magnifier>
            </Canvas>
        </Page>
    );
}

export default App;
